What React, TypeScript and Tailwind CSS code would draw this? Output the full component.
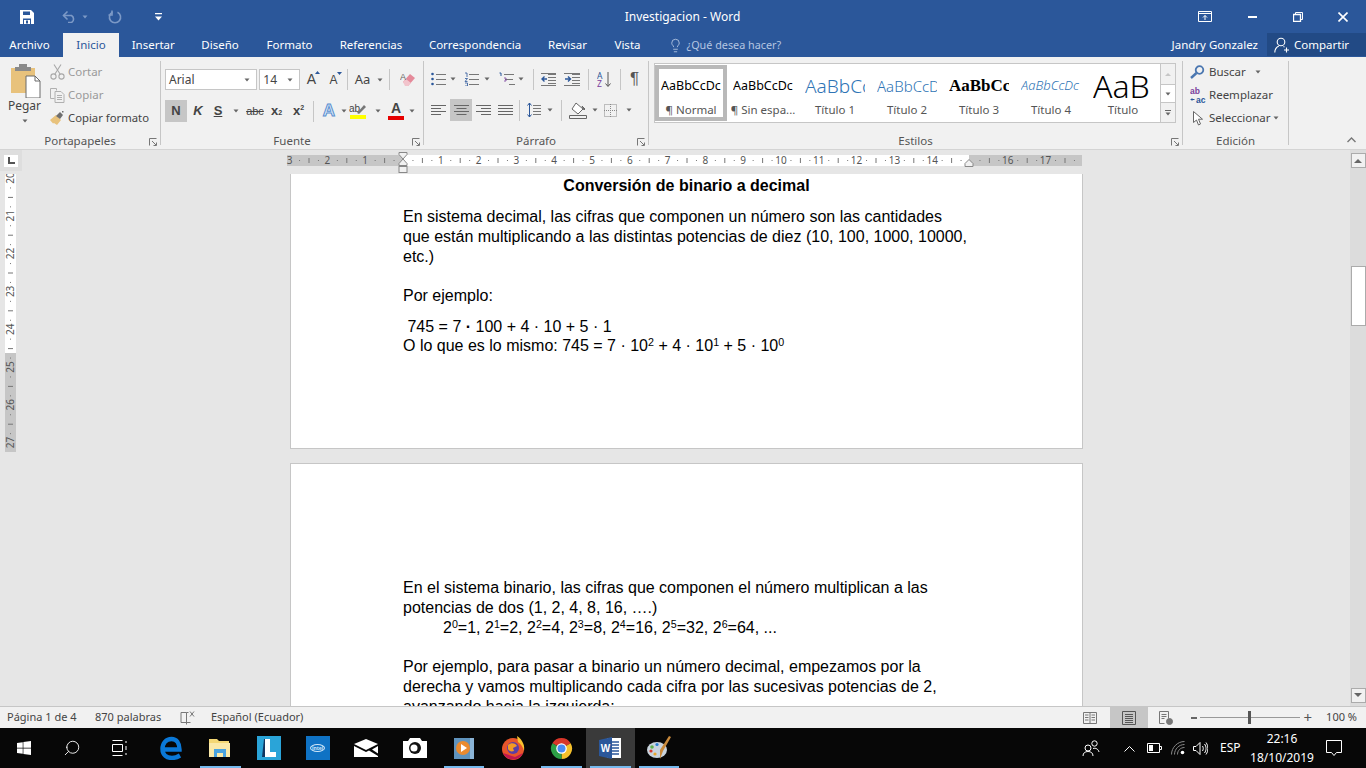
import type { ReactNode } from "react";
import { FaWindows } from "react-icons/fa";
import { Lightbulb, Search } from "lucide-react";

const uiFont = "font-['Noto_Sans','Open_Sans',sans-serif]";
const arial = "font-['Liberation_Sans',Arial,sans-serif]";

function Caret({ color = "#666666" }: { color?: string }) {
  return (
    <svg width="6" height="4" viewBox="0 0 6 4">
      <path d="M0.5 0.5h5L3 3.5z" fill={color} />
    </svg>
  );
}

function Sep({ className = "" }: { className?: string }) {
  return <div className={`w-px shrink-0 bg-[#c6c6c6] ${className}`} />;
}

function Tool({ className = "", children }: { className?: string; children?: ReactNode }) {
  return <div className={`flex h-full shrink-0 items-center justify-center ${className}`}>{children}</div>;
}

function Launcher() {
  return (
    <svg className="absolute right-[3px] top-[4px]" width="8" height="8" viewBox="0 0 8 8" fill="none" stroke="#777777">
      <path d="M0.5 7.5v-7h7" />
      <path d="M3 3l4 4M4.5 7.5h3v-3" />
    </svg>
  );
}

function Group({ className, label, launcher = true, children }: { className: string; label: string; launcher?: boolean; children: ReactNode }) {
  return (
    <div className={`flex h-full shrink-0 flex-col ${className}`}>
      <div className="min-h-0 flex-1">{children}</div>
      <div className="relative h-[15px] text-center text-[11.5px] leading-[14px] text-[#555555]">
        {label}
        {launcher && <Launcher />}
      </div>
    </div>
  );
}

function TitleBar() {
  return (
    <div className="grid h-[33px] shrink-0 grid-cols-[1fr_auto_1fr] items-center bg-[#2b579a] text-white">
      <div className="flex items-center">
        <svg className="ml-[20px]" width="14" height="14" viewBox="0 0 14 14">
          <path d="M0 0h11l3 3v11H0z" fill="#ffffff" />
          <path d="M3 1.5h7v3.5H3z" fill="#2b579a" />
          <path d="M3 8.5h8V14H3z" fill="#2b579a" />
          <path d="M4 10h6v4H4z" fill="#ffffff" />
          <path d="M6 10.5h2v3H6z" fill="#2b579a" />
        </svg>
        <svg className="ml-[28px]" width="15" height="13" viewBox="0 0 15 13" fill="none" stroke="#7c99c6" strokeWidth="1.6">
          <path d="M1.5 5.5h8a4 4 0 0 1 0 7H6" />
          <path d="M5.5 1.5l-4 4 4 4" />
        </svg>
        <div className="ml-[5px]"><Caret color="#7c99c6" /></div>
        <svg className="ml-[20px]" width="14" height="14" viewBox="0 0 14 14" fill="none" stroke="#7c99c6" strokeWidth="1.6">
          <path d="M4.5 2.2a5.6 5.6 0 1 0 5 0" />
          <path d="M4 0.5v4.5H0.5" />
        </svg>
        <svg className="ml-[33px]" width="7" height="8" viewBox="0 0 7 8" fill="#ffffff">
          <path d="M0 0h7v1.2H0zM0 3.5h7L3.5 7.5z" />
        </svg>
      </div>
      <div className="-ml-[1px] text-[12px]">Investigacion - Word</div>
      <div className="flex items-center justify-end">
        <svg className="mr-[36px]" width="14" height="11" viewBox="0 0 14 11" fill="none" stroke="#ffffff">
          <path d="M0.5 0.5h13v10h-13z" />
          <path d="M0.5 2.5h13" />
          <path d="M7 9V4.5M5 6.5l2-2 2 2" />
        </svg>
        <div className="mr-[36px] h-[2px] w-[9px] bg-white" />
        <svg className="mr-[35px]" width="10" height="10" viewBox="0 0 10 10" fill="none" stroke="#ffffff">
          <path d="M0.5 2.5h7v7h-7z" strokeWidth="1.3" />
          <path d="M2.5 2.5v-2h7v7h-2" />
        </svg>
        <svg className="mr-[18px]" width="10" height="10" viewBox="0 0 10 10" stroke="#ffffff" strokeWidth="1.6">
          <path d="M0.5 0.5l9 9M9.5 0.5l-9 9" />
        </svg>
      </div>
    </div>
  );
}

function TabRow() {
  const tabs = [
    { label: "Archivo", w: "w-[59px]", cls: "text-white" },
    { label: "Inicio", w: "w-[56px] ml-[4px]", cls: "bg-[#f1f1f1] text-[#2b579a]" },
    { label: "Insertar", w: "w-[68.5px]", cls: "text-white" },
    { label: "Diseño", w: "w-[65px]", cls: "text-white" },
    { label: "Formato", w: "w-[74px]", cls: "text-white" },
    { label: "Referencias", w: "w-[89px]", cls: "text-white" },
    { label: "Correspondencia", w: "w-[119px]", cls: "text-white" },
    { label: "Revisar", w: "w-[66px]", cls: "text-white" },
    { label: "Vista", w: "w-[54px]", cls: "text-white" },
  ];
  return (
    <div className="flex h-[24px] shrink-0 items-stretch bg-[#2b579a] text-[11.5px]">
      {tabs.map((t) => (
        <div key={t.label} className={`flex items-center justify-center ${t.w} ${t.cls}`}>
          {t.label}
        </div>
      ))}
      <div className="ml-[13px] flex items-center text-[#b4c6e2]">
        <Lightbulb size={15} strokeWidth={1.4} />
        <span className="ml-[4px] text-[10.8px] whitespace-nowrap">¿Qué desea hacer?</span>
      </div>
      <div className="ml-auto mr-[9px] flex items-center text-[11.5px] whitespace-nowrap text-white">Jandry Gonzalez</div>
      <div className="flex h-[23px] w-[99px] items-center bg-[#224a85] pl-[7px] text-[11.5px] text-white">
        <svg width="16" height="16" viewBox="0 0 16 16" fill="none" stroke="#ffffff" strokeWidth="1.1">
          <circle cx="7" cy="5" r="3.8" />
          <path d="M0.8 15.5c0-3.5 2-5.500 4-6.500M9.500 9.500l1 .6M12.500 10.500v5M10 13h5" />
        </svg>
        <span className="ml-[4px]">Compartir</span>
      </div>
    </div>
  );
}

function ClipboardGroup() {
  return (
    <Group className="w-[160px]" label="Portapapeles">
      <div className="flex h-full">
        <div className="flex w-[49px] flex-col items-center pt-[7px]">
          <svg className="ml-[3px]" width="30" height="34" viewBox="0 0 30 34">
            <path d="M0 4h24v25H0z" fill="#e8c27c" />
            <path d="M8 0h8v3h4v4H4V3h4z" fill="#8a8a8a" />
            <path d="M15 12h9l5 5v17H15z" fill="#ffffff" stroke="#6a6a6a" />
            <path d="M24 12v5h5" fill="none" stroke="#6a6a6a" />
          </svg>
          <span className="text-[12px] leading-[16px] text-[#444444]">Pegar</span>
          <div className="mt-[5px]"><Caret /></div>
        </div>
        <div className="flex flex-col pl-[1px] pt-[3.5px] text-[11.5px]">
          <div className="flex h-[23px] items-center text-[#9a9a9a]">
            <svg width="15" height="16" viewBox="0 0 15 16" fill="none" stroke="#a8a8a8" strokeWidth="1.1">
              <circle cx="3.5" cy="12.5" r="2.6" />
              <circle cx="11.5" cy="12.5" r="2.6" />
              <path d="M4.8 10.2L11 0.5M10.2 10.2L4 0.5" />
            </svg>
            <span className="ml-[3px]">Cortar</span>
          </div>
          <div className="flex h-[23px] items-center text-[#9a9a9a]">
            <svg width="15" height="15" viewBox="0 0 15 15" fill="none" stroke="#b0b0b0">
              <path d="M0.5 0.5h6v2M0.5 0.5v10h4M5 3.5h6l3 3v8H5zM7 7.5h5M7 9.5h5M7 11.5h5" />
            </svg>
            <span className="ml-[3px]">Copiar</span>
          </div>
          <div className="flex h-[23px] items-center whitespace-nowrap text-[#444444]">
            <svg width="15" height="15" viewBox="0 0 15 15">
              <path d="M0 9l6-5 5 5-4 5-3-2-1 .5z" fill="#e8c27c" />
              <path d="M6 5l4-4 3 3-3 4z" fill="#6e6e6e" />
              <path d="M12 0h1.5v1.5H12z" fill="#6e6e6e" />
            </svg>
            <span className="ml-[3px] text-[11.3px]">Copiar formato</span>
          </div>
        </div>
      </div>
    </Group>
  );
}

function FontGroup() {
  return (
    <Group className="w-[262px]" label="Fuente">
      <div className={`pl-[4px] pt-[12px] text-[#444444] ${arial}`}>
        <div className="flex h-[21px] items-center">
          <div className={`flex h-[21px] w-[93px] items-center justify-between border border-[#c6c6c6] bg-white pl-[3px] pr-[6px] text-[12px] ${uiFont}`}>
            Arial <Caret />
          </div>
          <div className={`ml-[2px] flex h-[21px] w-[41px] items-center justify-between border border-[#c6c6c6] bg-white pl-[3px] pr-[6px] text-[12px] ${uiFont}`}>
            14 <Caret />
          </div>
          <Tool className="w-[23px]">
            <span className="relative text-[14px]">A<svg className="absolute -right-[4px] top-[2px]" width="5" height="3"><path d="M0 3l2.5-3L5 3z" fill="#2b579a" /></svg></span>
          </Tool>
          <Tool className="w-[21px]">
            <span className="relative text-[12px]">A<svg className="absolute -right-[4px] top-[1px]" width="5" height="3"><path d="M0 0l2.5 3L5 0z" fill="#2b579a" /></svg></span>
          </Tool>
          <Sep className="ml-[3px] h-[21px]" />
          <Tool className="w-[29px]"><span className={`text-[13px] ${uiFont}`}>Aa</span></Tool>
          <Tool className="w-[12px] justify-start"><Caret /></Tool>
          <Sep className="h-[21px]" />
          <Tool className="ml-[3px] w-[30px]">
            <svg width="16" height="16" viewBox="0 0 16 16">
              <path d="M3 10l7-8 5 4-7 8z" fill="#e58a9a" />
              <path d="M3 10l3-3 5 4-3 3H5z" fill="#f2c4cc" />
              <text x="0" y="8" fontSize="9" fill="#666666">A</text>
            </svg>
          </Tool>
        </div>
        <div className="mt-[10px] flex h-[22px] items-center">
          <Tool className="w-[22px] bg-[#c6c6c6] text-[13px] font-bold">N</Tool>
          <Tool className="w-[22px] text-[13px] font-bold italic">K</Tool>
          <Tool className="w-[18px] text-[13px] font-bold underline">S</Tool>
          <Tool className="w-[18px]"><Caret /></Tool>
          <Tool className="w-[20px] text-[11px] line-through">abc</Tool>
          <Tool className="w-[23px] text-[13px] font-bold">x<sub className="text-[7px]">2</sub></Tool>
          <Tool className="w-[21px] text-[13px] font-bold">x<sup className="text-[7px]">2</sup></Tool>
          <Sep className="ml-[4px] h-[21px]" />
          <Tool className="w-[30px]">
            <span className="text-[17px] font-bold text-[#dceaf8] [-webkit-text-stroke:1px_#5b8fd0]">A</span>
          </Tool>
          <Tool className="-ml-[3px] w-[6px]"><Caret /></Tool>
          <Tool className="w-[22px]">
            <svg width="18" height="16" viewBox="0 0 18 16">
              <text x="0" y="9" fontSize="10" fill="#444444">ab</text>
              <path d="M8 10l7-8 2 2-7 7z" fill="#777777" />
              <path d="M1 12h16v4H1z" fill="#ffff00" />
            </svg>
          </Tool>
          <Tool className="w-[18px]"><Caret /></Tool>
          <Tool className="w-[18px] flex-col">
            <span className="text-[14px] font-bold leading-[13px]">A</span>
            <span className="mt-[1px] h-[4px] w-[16px] bg-[#e60000]" />
          </Tool>
          <Tool className="w-[14px]"><Caret /></Tool>
        </div>
      </div>
    </Group>
  );
}

function Lines({ d, w = 15 }: { d: string; w?: number }) {
  return (
    <svg width={w} height="13" viewBox={`0 0 ${w} 13`} fill="none" stroke="#666666">
      <path d={d} />
    </svg>
  );
}

function ParagraphGroup() {
  return (
    <Group className="w-[224px]" label="Párrafo">
      <div className="pt-[11px]">
        <div className="flex h-[22px] items-center pl-[7px]">
          <svg width="15" height="14" viewBox="0 0 15 14" fill="none" stroke="#777777">
            <circle cx="1.5" cy="2" r="1.3" fill="#2b579a" stroke="none" />
            <circle cx="1.5" cy="7" r="1.3" fill="#2b579a" stroke="none" />
            <circle cx="1.5" cy="12" r="1.3" fill="#2b579a" stroke="none" />
            <path d="M5 2.5h10M5 7.5h10M5 12.5h10" />
          </svg>
          <Tool className="w-[14px]"><Caret /></Tool>
          <svg className="ml-[4px]" width="15" height="14" viewBox="0 0 15 14" fill="none" stroke="#777777">
            <path d="M1 1h2v4M1 6.5h2.5L1 9.5h2.5M1 11h2.5v3H1" stroke="#2b579a" strokeWidth="0.8" />
            <path d="M5 2.5h10M5 7.5h10M5 12.5h10" />
          </svg>
          <Tool className="w-[15px]"><Caret /></Tool>
          <svg className="ml-[5px]" width="18" height="14" viewBox="0 0 18 14" fill="none" stroke="#777777">
            <path d="M0.5 1h1.5v3" stroke="#2b579a" />
            <path d="M5 2.5h10M6 7.5h8M10 12.5h6" />
            <path d="M5 6h2v3H5" stroke="#7a3e9d" strokeWidth="0.8" />
          </svg>
          <Tool className="w-[8px]"><Caret /></Tool>
          <Sep className="ml-[8px] h-[21px]" />
          <svg className="ml-[7px]" width="15" height="13" viewBox="0 0 15 13" fill="none" stroke="#777777">
            <path d="M7 1.5h8M7 4.5h8M7 7.5h8M7 10.5h8M0 12.5h15M0 .5h15" />
            <path d="M6 6H1.5M3.5 3.5L1 6l2.5 2.5" stroke="#2b579a" strokeWidth="1.4" />
          </svg>
          <svg className="ml-[8px]" width="16" height="13" viewBox="0 0 16 13" fill="none" stroke="#777777">
            <path d="M8 1.5h8M8 4.5h8M8 7.5h8M8 10.5h8M0 12.5h16M0 .5h16" />
            <path d="M1 6h5M4 3.5L6.5 6 4 8.5" stroke="#2b579a" strokeWidth="1.4" />
          </svg>
          <Sep className="ml-[8px] h-[21px]" />
          <svg className="ml-[8px]" width="15" height="17" viewBox="0 0 15 17" fill="none">
            <text x="0" y="7.5" fontSize="8.5" fill="#2b579a">A</text>
            <text x="0" y="16" fontSize="8.5" fill="#7a3e9d">Z</text>
            <path d="M11 1v14M8.5 12.5L11 15.5l2.5-3" stroke="#555555" />
          </svg>
          <Sep className="ml-[8px] h-[21px]" />
          <Tool className="w-[27px] text-[17px] text-[#555555]"><span className={arial}>¶</span></Tool>
        </div>
        <div className="mt-[9px] flex h-[22px] items-center">
          <Tool className="ml-[3px] w-[23px]"><Lines d="M0 1.5h15M0 4.5h10M0 7.5h15M0 10.5h10" /></Tool>
          <Tool className="w-[22px] bg-[#c6c6c6]"><Lines d="M0 1.5h15M2.5 4.5h10M0 7.5h15M2.5 10.5h10" /></Tool>
          <Tool className="w-[22px]"><Lines d="M0 1.5h15M5 4.5h10M0 7.5h15M5 10.5h10" /></Tool>
          <Tool className="w-[22px]"><Lines d="M0 1.5h15M0 4.5h15M0 7.5h15M0 10.5h15" /></Tool>
          <Sep className="ml-[3px] h-[21px]" />
          <svg className="ml-[7px]" width="14" height="16" viewBox="0 0 14 16" fill="none" stroke="#777777">
            <path d="M6 3.5h8M6 6.5h8M6 9.5h8M6 12.5h8" />
            <path d="M2.5 1v14M0.5 3.5L2.5 1l2 2.5M0.5 12.5l2 2.5 2-2.5" stroke="#2b579a" />
          </svg>
          <Tool className="w-[17px]"><Caret /></Tool>
          <Sep className="ml-[3px] h-[21px]" />
          <svg className="ml-[7px]" width="18" height="17" viewBox="0 0 18 17" fill="none" stroke="#666666">
            <path d="M7 1l7 6-5 5-6-5z" fill="#ffffff" />
            <path d="M13 4l3 3-1 1z" fill="#666666" />
            <path d="M0.5 13.5h17v3h-17z" fill="#f1f1f1" />
          </svg>
          <Tool className="w-[16px]"><Caret /></Tool>
          <svg className="ml-[1px]" width="13" height="13" viewBox="0 0 13 13" fill="none" stroke="#888888" strokeDasharray="1 1">
            <path d="M0.5 0.5h12v12h-12zM6.5 0v13M0 6.5h13" />
          </svg>
          <Tool className="w-[24px]"><Caret /></Tool>
        </div>
      </div>
    </Group>
  );
}

function StyleCell({ label, selected, children }: { label: string; selected?: boolean; children: ReactNode }) {
  return (
    <div className={`flex h-[56px] w-[72px] shrink-0 flex-col items-center overflow-hidden border-[4px] ${selected ? "border-[#b9b9b9]" : "border-white"}`}>
      <div className="flex h-[31px] w-[60px] items-center overflow-hidden whitespace-nowrap pt-[3px]">{children}</div>
      <div className="mt-[3px] text-[11.5px] leading-[14px] whitespace-nowrap text-[#555555]">{label}</div>
    </div>
  );
}

function StylesGroup() {
  return (
    <Group className="w-[533px]" label="Estilos">
      <div className="flex pl-[5px] pt-[6px]">
        <div className="flex h-[60px] w-[507px] items-center border border-[#c6c6c6] bg-white">
          <StyleCell label="¶ Normal" selected><span className={`text-[12.5px] text-black ${uiFont}`}>AaBbCcDc</span></StyleCell>
          <StyleCell label="¶ Sin espa..."><span className={`text-[12.5px] text-black ${uiFont}`}>AaBbCcDc</span></StyleCell>
          <StyleCell label="Título 1"><span className="text-[19px] font-light text-[#2e74b5]">AaBbCc</span></StyleCell>
          <StyleCell label="Título 2"><span className="text-[15px] font-light text-[#2e74b5]">AaBbCcD</span></StyleCell>
          <StyleCell label="Título 3"><span className="font-['Liberation_Serif',serif] text-[17px] font-bold text-black">AaBbCc</span></StyleCell>
          <StyleCell label="Título 4"><span className="text-[13px] font-light italic text-[#2e74b5]">AaBbCcDc</span></StyleCell>
          <StyleCell label="Título"><span className="text-[32px] leading-[26px] font-light text-black">AaB</span></StyleCell>
        </div>
        <div className="flex h-[60px] w-[15px] flex-col border border-l-0 border-[#c6c6c6] bg-[#f1f1f1]">
          <div className="flex h-[20px] items-center justify-center"><svg width="6" height="4"><path d="M0 4l3-3 3 3z" fill="#c6c6c6" /></svg></div>
          <div className="flex h-[19px] items-center justify-center border-y border-[#c6c6c6] bg-white"><Caret /></div>
          <div className="flex h-[19px] flex-col items-center justify-center gap-[1px]"><div className="h-px w-[6px] bg-[#666666]" /><Caret /></div>
        </div>
      </div>
    </Group>
  );
}

function EditGroup() {
  return (
    <Group className="w-[105px]" label="Edición" launcher={false}>
      <div className="flex flex-col pl-[7px] pt-[3.5px] text-[11.5px] whitespace-nowrap text-[#444444]">
        <div className="flex h-[23px] items-center">
          <svg width="15" height="14" viewBox="0 0 15 14" fill="none" stroke="#4a76b0" strokeWidth="1.8">
            <circle cx="9.5" cy="5" r="3.8" />
            <path d="M6.5 8L1 13" strokeWidth="2.4" />
          </svg>
          <span className="ml-[4px]">Buscar</span>
          <div className="ml-[9px]"><Caret /></div>
        </div>
        <div className="flex h-[23px] items-center">
          <svg width="16" height="17" viewBox="0 0 16 17">
            <text x="0" y="7" fontSize="8.5" fontWeight="700" fill="#7a3e9d" fontFamily="Liberation Sans">ab</text>
            <text x="6" y="16" fontSize="8.5" fontWeight="700" fill="#2b579a" fontFamily="Liberation Sans">ac</text>
            <path d="M4.500 12.500H1M2.200 11.300L1 12.500l1.200 1.200" stroke="#2b579a" fill="none" />
          </svg>
          <span className="ml-[3px]">Reemplazar</span>
        </div>
        <div className="flex h-[23px] items-center">
          <svg className="ml-[3px]" width="10" height="15" viewBox="0 0 10 15" fill="#ffffff" stroke="#666666">
            <path d="M0.5 0.5v11l3-2.5 2 5 2-1-2-4.8h4z" />
          </svg>
          <span className="ml-[6px]">Seleccionar</span>
          <div className="ml-[2px]"><Caret /></div>
        </div>
      </div>
    </Group>
  );
}

function Ribbon() {
  return (
    <div className={`flex h-[93px] shrink-0 border-b border-[#d4d4d4] bg-[#f1f1f1] ${uiFont}`}>
      <ClipboardGroup />
      <Sep className="my-[4px]" />
      <FontGroup />
      <Sep className="my-[4px]" />
      <ParagraphGroup />
      <Sep className="my-[4px]" />
      <StylesGroup />
      <Sep className="my-[4px]" />
      <EditGroup />
      <Sep className="my-[4px]" />
      <div className="ml-auto mr-[10px] flex items-end pb-[6px]">
        <svg width="9" height="6" viewBox="0 0 9 6" fill="none" stroke="#777777" strokeWidth="1.4">
          <path d="M0.5 5L4.5 1l4 4" />
        </svg>
      </div>
    </div>
  );
}

// ruler: x = 0 at the left margin, 37.8px per cm
const CM = 37.8;

function HorizontalRuler() {
  const origin = 123; // svg starts at x=280, margin at 403
  const nums = Array.from({ length: 21 }, (_, i) => i - 3);
  return (
    <svg width="810" height="24" viewBox="0 0 810 24" className="ml-[258px] shrink-0">
      <rect x="7" y="5" width="795" height="11" fill="#c6c6c6" />
      <rect x={origin} y="5" width="566" height="11" fill="#ffffff" />
      {nums.map((n) => {
        const x = origin + n * CM;
        const ticks = [0.25, 0.5, 0.75].map((f) => x + f * CM).filter((t) => t < 800 && t > 8);
        return (
          <g key={n}>
            {n !== 0 && n !== 15 && (
              <text x={x} y="14" fontSize="10" textAnchor="middle" fill="#555555" fontFamily="Noto Sans">
                {Math.abs(n)}
              </text>
            )}
            {ticks.map((t, i) => (
              <rect key={i} x={t} y={i === 1 ? 8 : 10} width="1" height={i === 1 ? 5 : 1} fill="#777777" />
            ))}
          </g>
        );
      })}
      <path d={`M${origin - 4} 2.5h8v2l-4 4.500 4 4.500v2h-8v-2l4-4.500-4-4.500z`} fill="#f1f1f1" stroke="#888888" />
      <rect x={origin - 4} y="16.5" width="8" height="6" fill="#f1f1f1" stroke="#888888" />
      <path d={`M${origin + 566 - 4} 16.5v-3l4-4 4 4v3z`} fill="#f1f1f1" stroke="#888888" />
    </svg>
  );
}

function VerticalRuler() {
  const nums = [20, 21, 22, 23, 24, 25, 26, 27];
  return (
    <svg width="11" height="278" viewBox="0 0 11 278" className="ml-[5px] shrink-0">
      <rect width="11" height="179" fill="#ffffff" />
      <rect y="179" width="11" height="99" fill="#c6c6c6" />
      {nums.map((n, i) => {
        const y = 4 + i * CM;
        return (
          <g key={n}>
            <text transform={`translate(9 ${y}) rotate(-90)`} fontSize="10" textAnchor="middle" fill="#555555" fontFamily="Noto Sans">
              {n}
            </text>
            {i < 7 && (
              <>
                <rect x="5" y={y + 0.25 * CM} width="1" height="1" fill="#777777" />
                <rect x="3" y={y + 0.5 * CM} width="5" height="1" fill="#777777" />
                <rect x="5" y={y + 0.75 * CM} width="1" height="1" fill="#777777" />
              </>
            )}
          </g>
        );
      })}
    </svg>
  );
}

function Sup({ children }: { children: ReactNode }) {
  return <sup className="top-[-5px] text-[10.7px]">{children}</sup>;
}

function Document() {
  return (
    <div className={`min-h-0 flex-1 overflow-hidden text-[16px] leading-[20px] text-black ${arial}`}>
      <div className="ml-[269px] h-[275px] w-[793px] border-x border-b border-[#c6c6c6] bg-white pt-[2px]">
        <div className="text-center font-bold">Conversión de binario a decimal</div>
        <div className="pl-[112px] pt-[11px] whitespace-nowrap">
          <p>
            En sistema decimal, las cifras que componen un número son las cantidades<br />
            que están multiplicando a las distintas potencias de diez (10, 100, 1000, 10000,<br />
            etc.)
          </p>
          <p className="mt-[19px]">Por ejemplo:</p>
          <p className="mt-[11px] leading-[19px]">
            &nbsp;745 = 7 <b>·</b> 100 + 4 · 10 + 5 · 1<br />
            O lo que es lo mismo: 745 = 7 · 10<Sup>2</Sup> + 4 · 10<Sup>1</Sup> + 5 · 10<Sup>0</Sup>
          </p>
        </div>
      </div>
      <div className="ml-[269px] mt-[14px] h-[400px] w-[793px] border-x border-t border-[#c6c6c6] bg-white pl-[112px] pt-[114px] whitespace-nowrap">
        <p>
          En el sistema binario, las cifras que componen el número multiplican a las<br />
          potencias de dos (1, 2, 4, 8, 16, ….)
        </p>
        <p className="pl-[40px]">
          2<Sup>0</Sup>=1, 2<Sup>1</Sup>=2, 2<Sup>2</Sup>=4, 2<Sup>3</Sup>=8, 2<Sup>4</Sup>=16, 2<Sup>5</Sup>=32, 2<Sup>6</Sup>=64, ...
        </p>
        <p className="mt-[19px]">
          Por ejemplo, para pasar a binario un número decimal, empezamos por la<br />
          derecha y vamos multiplicando cada cifra por las sucesivas potencias de 2,<br />
          avanzando hacia la izquierda:
        </p>
      </div>
    </div>
  );
}

function Scrollbar() {
  return (
    <div className="flex w-[16px] shrink-0 flex-col items-center bg-[#dcdcdc] pt-[3px] pb-[3px]">
      <div className="flex h-[15px] w-[15px] items-center justify-center border border-[#ababab] bg-[#f1f1f1]">
        <svg width="8" height="5"><path d="M0 5l4-4 4 4z" fill="#666666" /></svg>
      </div>
      <div className="mt-[98px] h-[60px] w-[15px] border border-[#ababab] bg-white" />
      <div className="flex-1" />
      <div className="flex h-[15px] w-[15px] items-center justify-center border border-[#ababab] bg-[#f1f1f1]">
        <svg width="8" height="5"><path d="M0 0l4 4 4-4z" fill="#666666" /></svg>
      </div>
    </div>
  );
}

function Workspace() {
  return (
    <div className="flex min-h-0 flex-1 bg-[#e6e6e6]">
      <div className="flex min-w-0 flex-1 flex-col">
        <div className="flex h-[24px] shrink-0">
          <div className="flex h-[21px] w-[22px] items-center justify-center bg-[#dedede]">
            <div className="flex h-[12px] w-[14px] items-center justify-center bg-white">
              <svg width="7" height="7" viewBox="0 0 7 7"><path d="M0 0h2v5h5v2H0z" fill="#555555" /></svg>
            </div>
          </div>
          <HorizontalRuler />
        </div>
        <div className="flex min-h-0 flex-1">
          <div className="w-[21px] shrink-0 pt-0"><VerticalRuler /></div>
          <Document />
        </div>
      </div>
      <Scrollbar />
    </div>
  );
}

function StatusBar() {
  return (
    <div className={`flex h-[22px] shrink-0 items-center border-t border-[#c6c6c6] bg-[#f1f1f1] text-[11px] text-[#444444] ${uiFont}`}>
      <span className="ml-[7px] w-[88px]">Página 1 de 4</span>
      <span className="w-[85px]">870 palabras</span>
      <svg width="15" height="15" viewBox="0 0 15 15" fill="none" stroke="#777777">
        <path d="M6.500 2.500v12M6.500 2.500H1v10h5.500M6.500 2.500h2M6.500 12.500h4" />
        <path d="M10 1.500l4 5M14 1.500l-4 5" />
      </svg>
      <span className="ml-[16px]">Español (Ecuador)</span>
      <div className="ml-auto flex h-full items-center">
        <svg width="14" height="14" viewBox="0 0 14 14" fill="none" stroke="#777777">
          <path d="M7 1.5v11M7 1.5H.5v11H7M7 1.5h6.500v11H7M2 4h3.500M2 6.500h3.500M2 9h3.500M8.500 4H12M8.500 6.500H12M8.500 9H12" />
        </svg>
        <div className="ml-[13px] flex h-full w-[38px] items-center justify-center bg-[#c6c6c6]">
          <svg width="14" height="14" viewBox="0 0 14 14" fill="none" stroke="#555555">
            <path d="M.5.5h13v13H.5zM3 3.500h8M3 5.500h8M3 7.500h8M3 9.500h8M3 11.500h8" />
          </svg>
        </div>
        <svg className="ml-[11px]" width="14" height="14" viewBox="0 0 14 14" fill="none" stroke="#777777">
          <path d="M.5.5h9v7M.5.5v12h5M2.500 3.500h5M2.500 5.500h5M2.500 7.500h3" />
          <circle cx="10.5" cy="10.5" r="3" fill="#777777" />
        </svg>
        <div className="ml-[18px] h-[2px] w-[6px] bg-[#666666]" />
        <div className="relative ml-[3px] h-px w-[100px] bg-[#999999]">
          <div className="absolute -top-[6px] left-[48px] h-[13px] w-[3px] bg-[#555555]" />
        </div>
        <span className="ml-[4px] text-[15px] leading-[15px] text-[#555555]">+</span>
        <span className="ml-[14px] mr-[9px] whitespace-nowrap">100 %</span>
      </div>
    </div>
  );
}

function TaskIcon({ underline, active, children }: { underline?: boolean; active?: boolean; children: ReactNode }) {
  return (
    <div className={`relative flex h-full w-[48.75px] shrink-0 items-center justify-center ${active ? "bg-[#3a3a3a]" : ""}`}>
      {children}
      {underline && <div className="absolute bottom-0 left-[4px] right-[4px] h-[2px] bg-[#76b9ed]" />}
    </div>
  );
}

function Taskbar() {
  return (
    <div className={`flex h-[40px] shrink-0 items-center bg-[#070707] text-[12px] text-white ${uiFont}`}>
      <div className="flex h-full w-[47px] shrink-0 items-center justify-center">
        <FaWindows size={16} color="#ffffff" />
      </div>
      <div className="flex h-full w-[49px] shrink-0 items-center justify-center">
        <Search size={18} strokeWidth={1.2} color="#ffffff" className="-scale-x-100" />
      </div>
      <div className="mr-[3px] flex h-full w-[48px] shrink-0 items-center justify-center">
        <svg width="17" height="16" viewBox="0 0 17 16" fill="none" stroke="#ffffff">
          <path d="M.5 .5h10M.5 15.500h10M.5 4.500h10v7H.5zM14 1v2M14 6v4M14 13v2" />
        </svg>
      </div>
      <TaskIcon>
        <svg width="22" height="24" viewBox="0 0 22 24" fill="none" stroke="#0a78d7" strokeWidth="4.4">
          <path d="M4 13.500H19.500C19.500 7 16.500 3 11.500 3C6 3 2.500 7.500 2.500 13C2.500 19 7 22 12 22C15 22 17.500 21 20 19.500" />
        </svg>
      </TaskIcon>
      <TaskIcon underline>
        <svg width="22" height="20" viewBox="0 0 22 20">
          <path d="M0 1h8l2 2h10v16H0z" fill="#f4d774" />
          <path d="M0 5h21v14H0z" fill="#fbe9a8" />
          <path d="M5 11h12v8h-3v-4H8v4H5z" fill="#4aa3df" />
        </svg>
      </TaskIcon>
      <TaskIcon>
        <div className="flex h-[24px] w-[24px] items-center justify-center bg-[#2aa4d8]">
          <svg width="14" height="18" viewBox="0 0 14 18">
            <path d="M2 0h4L3 18H0z" fill="#12355f" />
            <path d="M3 0h5v13h6v5H3z" fill="#ffffff" />
          </svg>
        </div>
      </TaskIcon>
      <TaskIcon>
        <div className="flex h-[24px] w-[24px] items-center justify-center bg-[#0f72c4]">
          <div className="flex h-[8px] w-[15px] items-center justify-center rounded-[50%] border border-[#cfe6f8] text-[5px] leading-none font-bold text-[#cfe6f8]">intel</div>
        </div>
      </TaskIcon>
      <TaskIcon>
        <svg width="24" height="18" viewBox="0 0 24 18">
          <path d="M0 5L12 0l12 5-12 6z" fill="#ffffff" />
          <path d="M0 7l12 6 3-1.500 9 5.500v1H0z" fill="#ffffff" />
          <path d="M24 7v7.500l-6-4z" fill="#ffffff" />
        </svg>
      </TaskIcon>
      <TaskIcon>
        <svg width="24" height="20" viewBox="0 0 24 20">
          <path d="M0 3h5l2-3h10l2 3h5v17H0z" fill="#ffffff" />
          <circle cx="12" cy="10" r="6" fill="#111111" />
          <circle cx="11" cy="10" r="3.5" fill="#ffffff" />
        </svg>
      </TaskIcon>
      <TaskIcon underline>
        <svg width="20" height="22" viewBox="0 0 20 22">
          <path d="M0 1h20v21H0z" fill="#8ab4d6" />
          <path d="M0 1h16v21H0z" fill="#5f93bd" />
          <circle cx="9" cy="11" r="7" fill="#e98a2f" />
          <path d="M7 7l6 4-6 4z" fill="#ffffff" />
        </svg>
      </TaskIcon>
      <TaskIcon>
        <svg width="24" height="24" viewBox="0 0 24 24">
          <circle cx="12" cy="13" r="11" fill="#e8552b" />
          <path d="M2 17a11 11 0 0 0 20 0l-8 4z" fill="#c2174f" />
          <path d="M16 0c6 4 8 10 7 15-1-4-3-7-6-9z" fill="#f9c12e" />
          <circle cx="12" cy="12" r="6" fill="#5b3fa6" />
          <path d="M7 9c3-3 8-2 9 1l-4 2 1 3c-3 1-5 0-6-2z" fill="#f59a23" />
        </svg>
      </TaskIcon>
      <TaskIcon underline>
        <svg width="23" height="23" viewBox="0 0 24 24">
          <path d="M12 12L2.47 6.5A11 11 0 0 1 21.53 6.5Z" fill="#d8362a" />
          <path d="M12 12L21.53 6.5A11 11 0 0 1 12 23Z" fill="#f5c02c" />
          <path d="M12 12L12 23A11 11 0 0 1 2.47 6.5Z" fill="#2c9f46" />
          <circle cx="12" cy="12" r="5.5" fill="#ffffff" />
          <circle cx="12" cy="12" r="4.2" fill="#4a8af4" />
        </svg>
      </TaskIcon>
      <TaskIcon underline active>
        <svg width="22" height="22" viewBox="0 0 22 22">
          <path d="M8 1h14v20H8z" fill="#ffffff" />
          <path d="M13 5h7M13 8h7M13 11h7M13 14h7M13 17h7" stroke="#2b579a" strokeWidth="1.4" />
          <path d="M0 3l13-3v22L0 19z" fill="#2b579a" />
          <text x="1.8" y="15" fontSize="10" fontWeight="700" fill="#ffffff" fontFamily="Liberation Sans">W</text>
        </svg>
      </TaskIcon>
      <TaskIcon underline>
        <svg width="24" height="24" viewBox="0 0 24 24">
          <ellipse cx="10" cy="14" rx="10" ry="8" fill="#c9d4de" />
          <circle cx="5" cy="11" r="1.8" fill="#5fb14a" />
          <circle cx="4" cy="15" r="1.6" fill="#d8362a" />
          <circle cx="10" cy="8.5" r="1.6" fill="#2b7fd0" />
          <circle cx="8" cy="18" r="1.6" fill="#e8a62c" />
          <path d="M22 0l2 1-8 14-3 8 0-9z" fill="#c98a3c" />
        </svg>
      </TaskIcon>
      <div className="ml-auto flex h-full items-center">
        <svg width="18" height="17" viewBox="0 0 18 17" fill="none" stroke="#ffffff">
          <circle cx="6" cy="8" r="3" />
          <path d="M1 16c0-3 2-4.500 5-4.500S11 13 11 16" />
          <circle cx="12.5" cy="3.5" r="2.7" />
          <path d="M11 8.500c3-1 5.500 1 6 3.500" />
        </svg>
        <svg className="ml-[24px]" width="11" height="7" viewBox="0 0 11 7" fill="none" stroke="#ffffff">
          <path d="M.5 6.500l5-5 5 5" />
        </svg>
        <svg className="ml-[12px]" width="15" height="10" viewBox="0 0 15 10" fill="none" stroke="#ffffff">
          <path d="M.5 .5h12v9H.5zM13 3.500h1.500v3H13" />
          <path d="M2 2h4v6H2z" fill="#ffffff" stroke="none" />
        </svg>
        <svg className="ml-[9px]" width="14" height="14" viewBox="0 0 14 14" fill="none" stroke="#8a8a8a">
          <path d="M.5 13.500c0-7 6-13 13-13M3.500 13.500c0-5.500 4.500-10 10-10M6.500 13.500c0-4 3-7 7-7" />
          <circle cx="11.5" cy="11.5" r="1.8" fill="#ffffff" stroke="none" />
        </svg>
        <svg className="ml-[8px]" width="15" height="15" viewBox="0 0 15 15" fill="none" stroke="#ffffff">
          <path d="M.5 5.500h2.500l4-4v12l-4-4H.5z" />
          <path d="M9.500 5c1 1.500 1 3.500 0 5M11.500 3c2 2.500 2 6.500 0 9M13 1.500c2.500 3.500 2.500 8.500 0 12" />
        </svg>
        <span className="ml-[12px] w-[20px] text-[12px]">ESP</span>
        <div className="flex w-[84px] flex-col items-center text-[12px] leading-[19px]">
          <span>22:16</span>
          <span>18/10/2019</span>
        </div>
        <svg className="ml-[2px] mr-[24px]" width="16" height="16" viewBox="0 0 16 16" fill="none" stroke="#ffffff">
          <path d="M.5 .5h15v12h-5l-2.500 3-2.500-3h-5z" />
        </svg>
      </div>
    </div>
  );
}

export default function App() {
  return (
    <div className={`flex h-[768px] w-[1366px] flex-col overflow-hidden ${uiFont}`}>
      <TitleBar />
      <TabRow />
      <Ribbon />
      <Workspace />
      <StatusBar />
      <Taskbar />
    </div>
  );
}
